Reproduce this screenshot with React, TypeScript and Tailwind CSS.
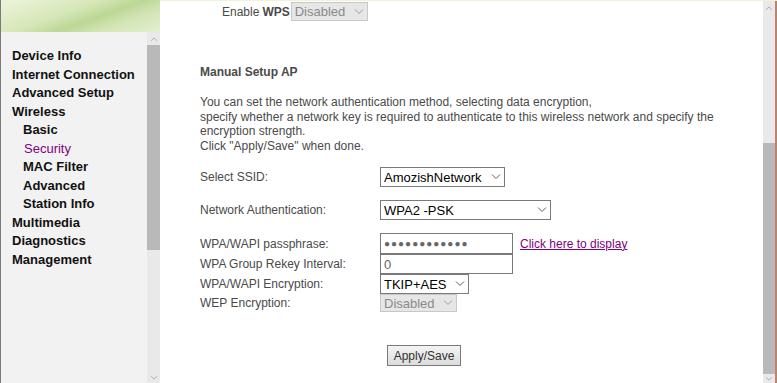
import React from 'react';

const font = { fontFamily: '"Liberation Sans", Arial, sans-serif' };

const menu: { label: string; sub?: boolean; active?: boolean }[] = [
  { label: 'Device Info' },
  { label: 'Internet Connection' },
  { label: 'Advanced Setup' },
  { label: 'Wireless' },
  { label: 'Basic', sub: true },
  { label: 'Security', sub: true, active: true },
  { label: 'MAC Filter', sub: true },
  { label: 'Advanced', sub: true },
  { label: 'Station Info', sub: true },
  { label: 'Multimedia' },
  { label: 'Diagnostics' },
  { label: 'Management' },
];

function Chevron({ up = false, className = '' }: { up?: boolean; className?: string }) {
  return (
    <svg width="10" height="6" viewBox="0 0 10 6" className={className}>
      <path
        d={up ? 'M1 5.5 L5 1.5 L9 5.5' : 'M1 0.5 L5 4.5 L9 0.5'}
        fill="none"
        stroke="currentColor"
        strokeWidth="1"
      />
    </svg>
  );
}

function Select({
  value,
  width,
  height = 'h-[20px]',
  disabled,
}: {
  value: string;
  width: string;
  height?: string;
  disabled?: boolean;
}) {
  return (
    <div
      className={`flex ${width} ${height} items-center justify-between border px-[3px] text-[13px] ${
        disabled ? 'border-[#c8c8c8] bg-[#e6e6e6] text-[#8a8a8a]' : 'border-[#7a7a7a] bg-white text-black'
      }`}
    >
      <span className="leading-none">{value}</span>
      <Chevron className={disabled ? 'text-[#9a9a9a]' : 'text-[#606060]'} />
    </div>
  );
}

function Field({ label, children, className = '' }: { label: string; children: React.ReactNode; className?: string }) {
  return (
    <div className={`flex items-center ${className}`}>
      <div className="w-[180px] text-[12px] text-[#4a4a4a]">{label}</div>
      {children}
    </div>
  );
}

export default function App() {
  return (
    <div className="flex h-[383px] w-[777px] overflow-hidden bg-white" style={font}>
      {/* left frame */}
      <div className="flex w-[160px] shrink-0 flex-col border-l border-[#7a7a7a]">
        <div className="h-[32px] shrink-0 bg-[linear-gradient(160deg,#eef4dc_0%,#d6e7b8_40%,#bcd795_58%,#d3e5b6_75%,#e4efd0_100%)]" />
        <div className="flex flex-1">
          <div className="flex flex-1 flex-col bg-[#f2f2f2] pt-[15px] pl-[11px]">
            {menu.map((m) => (
              <div
                key={m.label}
                className={`h-[18.5px] text-[13px] leading-[18px] ${m.sub ? 'pl-[11px]' : ''} ${
                  m.active ? 'pl-[12px] font-normal text-[#800080]' : 'font-bold text-[#111]'
                }`}
              >
                {m.label}
              </div>
            ))}
          </div>
          <div className="flex w-[13px] flex-col bg-[#e9e9e9]">
            <div className="flex h-[13px] items-center justify-center text-[#9a9a9a]">
              <Chevron up className="scale-75" />
            </div>
            <div className="h-[205px] bg-[#b9b9b9]" />
            <div className="flex-1" />
            <div className="flex h-[10px] items-center justify-center text-[#9a9a9a]">
              <Chevron className="scale-75" />
            </div>
          </div>
        </div>
      </div>

      {/* right frame */}
      <div className="flex flex-1 border-t border-[#f3f1d6]">
        <div className="flex flex-1 flex-col pl-[40px] text-[12px] text-[#4a4a4a]">
          <div className="mt-[1px] flex h-[19px] items-center pl-[22px]">
            <span>Enable</span>
            <span className="ml-[3px] font-bold">WPS</span>
            <div className="ml-[1px]">
              <Select value="Disabled" width="w-[77px]" height="h-[19px]" disabled />
            </div>
          </div>

          <div className="mt-[42px] font-bold">Manual Setup AP</div>

          <div className="mt-[14px] leading-[14.6px]">
            You can set the network authentication method, selecting data encryption,
            <br />
            specify whether a network key is required to authenticate to this wireless network and specify the
            encryption strength.
            <br />
            Click "Apply/Save" when done.
          </div>

          <Field label="Select SSID:" className="mt-[14px] h-[20px]">
            <Select value="AmozishNetwork" width="w-[125px]" />
          </Field>

          <Field label="Network Authentication:" className="mt-[13px] h-[20px]">
            <Select value="WPA2 -PSK" width="w-[171px]" />
          </Field>

          <Field label="WPA/WAPI passphrase:" className="mt-[13px] h-[21px]">
            <div className="flex h-[21px] w-[133px] items-center border border-[#7a7a7a] px-[3px] text-[10px] tracking-[1px] text-[#666]">
              ●●●●●●●●●●●●
            </div>
            <a className="ml-[7px] text-[12px] text-[#800080] underline">Click here to display</a>
          </Field>

          <Field label="WPA Group Rekey Interval:" className="h-[20px]">
            <div className="flex h-[20px] w-[133px] items-center border border-[#7a7a7a] px-[3px] text-[13px] text-[#666]">
              0
            </div>
          </Field>

          <Field label="WPA/WAPI Encryption:" className="h-[20px]">
            <Select value="TKIP+AES" width="w-[89px]" />
          </Field>

          <Field label="WEP Encryption:" className="h-[18px]">
            <Select value="Disabled" width="w-[77px]" height="h-[18px]" disabled />
          </Field>

          <div className="mt-[33px] pl-[187px]">
            <button className="h-[21px] w-[74px] border border-[#7a7a7a] bg-[linear-gradient(#f4f4f4,#dcdcdc)] text-[12px] text-[#333]">
              Apply/Save
            </button>
          </div>
        </div>

        <div className="flex w-[12px] flex-col bg-[#e9e9e9]">
          <div className="flex h-[14px] items-center justify-center text-[#9a9a9a]">
            <Chevron up className="scale-75" />
          </div>
          <div className="h-[128px]" />
          <div className="h-[231px] bg-[#b9b9b9]" />
          <div className="flex flex-1 items-center justify-center text-[#9a9a9a]">
            <Chevron className="scale-75" />
          </div>
        </div>
        <div className="w-[2px] bg-[#b8846a]" />
      </div>
    </div>
  );
}
